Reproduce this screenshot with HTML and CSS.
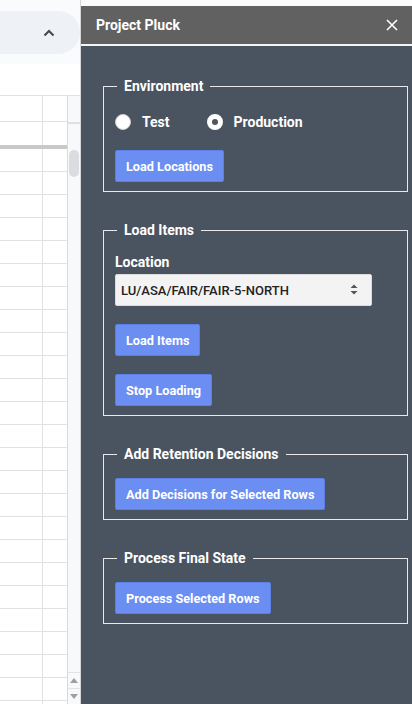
FILE: index.html
```html
<!DOCTYPE html>
<html lang="en">
<head>
<meta charset="utf-8">
<title>Project Pluck</title>
<link rel="stylesheet" href="styles.css">
</head>
<body>
<div class="app">
  <div class="sheet">
    <div class="topbar">
      <div class="pill">
        <svg class="chev" width="12" height="8" viewBox="0 0 12 8"><path d="M1.5 6.5 L6 2 L10.5 6.5" fill="none" stroke="#444746" stroke-width="2"/></svg>
      </div>
    </div>
    <div class="grid-area">
      <div class="cells">
        <div class="row r1"></div>
        <div class="row r2"></div>
        <div class="freeze"></div>
        <div class="rows"></div>
      </div>
      <div class="vscroll">
        <div class="band"></div>
        <div class="thumb"></div>
        <div class="fill"></div>
        <div class="arrow"><svg width="8" height="5" viewBox="0 0 8 5"><path d="M0 5 L4 0 L8 5 Z" fill="#9aa0a6"/></svg></div>
        <div class="arrow"><svg width="8" height="5" viewBox="0 0 8 5"><path d="M0 0 L4 5 L8 0 Z" fill="#9aa0a6"/></svg></div>
      </div>
    </div>
  </div>
  <aside class="panel">
    <div class="panel-top"></div>
    <header class="panel-head">
      <span class="title">Project Pluck</span>
      <svg class="close" width="12" height="12" viewBox="0 0 12 12"><path d="M1 1 L11 11 M11 1 L1 11" stroke="#fff" stroke-width="1.6" fill="none"/></svg>
    </header>
    <main class="panel-body">
      <fieldset class="group">
        <legend>Environment</legend>
        <div class="radios">
          <label class="radio"><input type="radio" name="env"><span>Test</span></label>
          <label class="radio"><input type="radio" name="env" checked><span>Production</span></label>
        </div>
        <button class="btn first-gap">Load Locations</button>
      </fieldset>
      <fieldset class="group">
        <legend>Load Items</legend>
        <label class="field-label">Location</label>
        <div class="select-wrap">
          <select class="select"><option>LU/ASA/FAIR/FAIR-5-NORTH</option></select>
          <svg class="select-arrows" width="8" height="11" viewBox="0 0 8 11"><path d="M0.5 4 L4 0.5 L7.5 4 Z M0.5 7 L4 10.5 L7.5 7 Z" fill="#555"/></svg>
        </div>
        <button class="btn gap18">Load Items</button>
        <button class="btn gap18">Stop Loading</button>
      </fieldset>
      <fieldset class="group">
        <legend>Add Retention Decisions</legend>
        <button class="btn">Add Decisions for Selected Rows</button>
      </fieldset>
      <fieldset class="group">
        <legend>Process Final State</legend>
        <button class="btn">Process Selected Rows</button>
      </fieldset>
    </main>
  </aside>
</div>
</body>
</html>
```
FILE: styles.css
```css
* { box-sizing: border-box; }
html, body { margin: 0; padding: 0; height: 100%; }
body {
  font-family: Roboto, "Liberation Sans", Arial, sans-serif;
  background: #fff;
  overflow: hidden;
}
.app {
  display: flex;
  width: 412px;
  height: 704px;
}

/* ---------- spreadsheet side ---------- */
.sheet {
  width: 80px;
  display: flex;
  flex-direction: column;
}
.topbar {
  height: 64px;
  background: #f9fbfd;
  padding-top: 11px;
}
.pill {
  height: 43px;
  background: #eef2f7;
  border-radius: 0 22px 22px 0;
  display: flex;
  align-items: center;
  justify-content: flex-end;
  padding-right: 25px;
}
.grid-area {
  flex: 1;
  display: flex;
  margin-top: 31px;
  border-top: 1px solid #e1e1e1;
}
.cells {
  width: 67px;
  display: flex;
  flex-direction: column;
  background-image: linear-gradient(to right, transparent 42px, #e1e1e1 42px, #e1e1e1 43px, transparent 43px);
}
.row { border-bottom: 1px solid #e1e1e1; }
.r1 { height: 26px; }
.r2 { height: 23px; border-bottom: none; }
.freeze { height: 4px; background: #c9c9c9; }
.rows {
  flex: 1;
  background-image: repeating-linear-gradient(to bottom, transparent 0, transparent 22px, #e1e1e1 22px, #e1e1e1 23px);
}
.vscroll {
  width: 13px;
  border-left: 1px solid #dadada;
  background: #f8f9fa;
  display: flex;
  flex-direction: column;
}
.band { margin-top: 26px; height: 2px; background: #dde0e6; }
.thumb {
  margin: 26px 0 0 1px;
  width: 10px;
  height: 27px;
  border-radius: 5px;
  background: #dadce0;
}
.fill { flex: 1; }
.arrow {
  height: 16px;
  border-top: 1px solid #e3e3e3;
  display: flex;
  align-items: center;
  justify-content: center;
}

/* ---------- sidebar panel ---------- */
.panel {
  flex: 1;
  display: flex;
  flex-direction: column;
  border-left: 1px solid #d6d6d6;
  background: #4a5360;
}
.panel-top { height: 6px; background: #f9fbfd; }
.panel-head {
  height: 40px;
  background: #616161;
  border-bottom: 2px solid #f4f4f4;
  display: flex;
  align-items: center;
  justify-content: space-between;
  padding: 0 14px 1px 15px;
}
.title {
  color: #fff;
  font-weight: 700;
  font-size: 14px;
}
.panel-body {
  flex: 1;
  padding: 32px 4px 0 22px;
}
.group {
  margin: 0 0 30px 0;
  padding: 16px 11px 9px 11px;
  border: 1px solid #e8e8e8;
  display: flex;
  flex-direction: column;
  align-items: flex-start;
  min-width: 0;
}
.group legend {
  margin-left: 2px;
  padding: 0 7px;
  color: #fff;
  font-weight: 700;
  font-size: 14px;
  line-height: 16px;
}
.radios {
  display: flex;
  align-items: center;
  height: 24px;
}
.radio {
  display: flex;
  align-items: center;
  color: #fff;
  font-weight: 700;
  font-size: 14px;
  margin-right: 37px;
}
.radio input {
  appearance: none;
  -webkit-appearance: none;
  margin: 0 11px 0 0;
  width: 16px;
  height: 16px;
  border-radius: 50%;
  background: #fff;
  border: 1px solid #d0d0d0;
}
.radio input:checked {
  border: 5px solid #fff;
  background: #4f565f;
}
.btn {
  height: 32px;
  padding: 0 10px;
  border: 1px solid #5c80e6;
  border-radius: 2px;
  background: #6a8ef2;
  color: #fff;
  font-family: Roboto, "Liberation Sans", Arial, sans-serif;
  font-weight: 700;
  font-size: 12.7px;
}
.first-gap { margin-top: 16px; }
.gap18 { margin-top: 18px; }
.field-label {
  color: #fff;
  font-weight: 700;
  font-size: 14px;
  line-height: 17px;
  margin-bottom: 3px;
}
.select-wrap {
  position: relative;
  width: 257px;
}
.select {
  appearance: none;
  -webkit-appearance: none;
  width: 257px;
  height: 32px;
  background: #f3f3f3;
  border: 1px solid #dcdcdc;
  border-radius: 2px;
  padding: 0 0 0 5px;
  color: #222;
  font-family: Roboto, "Liberation Sans", Arial, sans-serif;
  font-size: 13px;
  font-weight: 500;
}
.select-arrows {
  position: absolute;
  right: 14px;
  top: 10px;
}
```
